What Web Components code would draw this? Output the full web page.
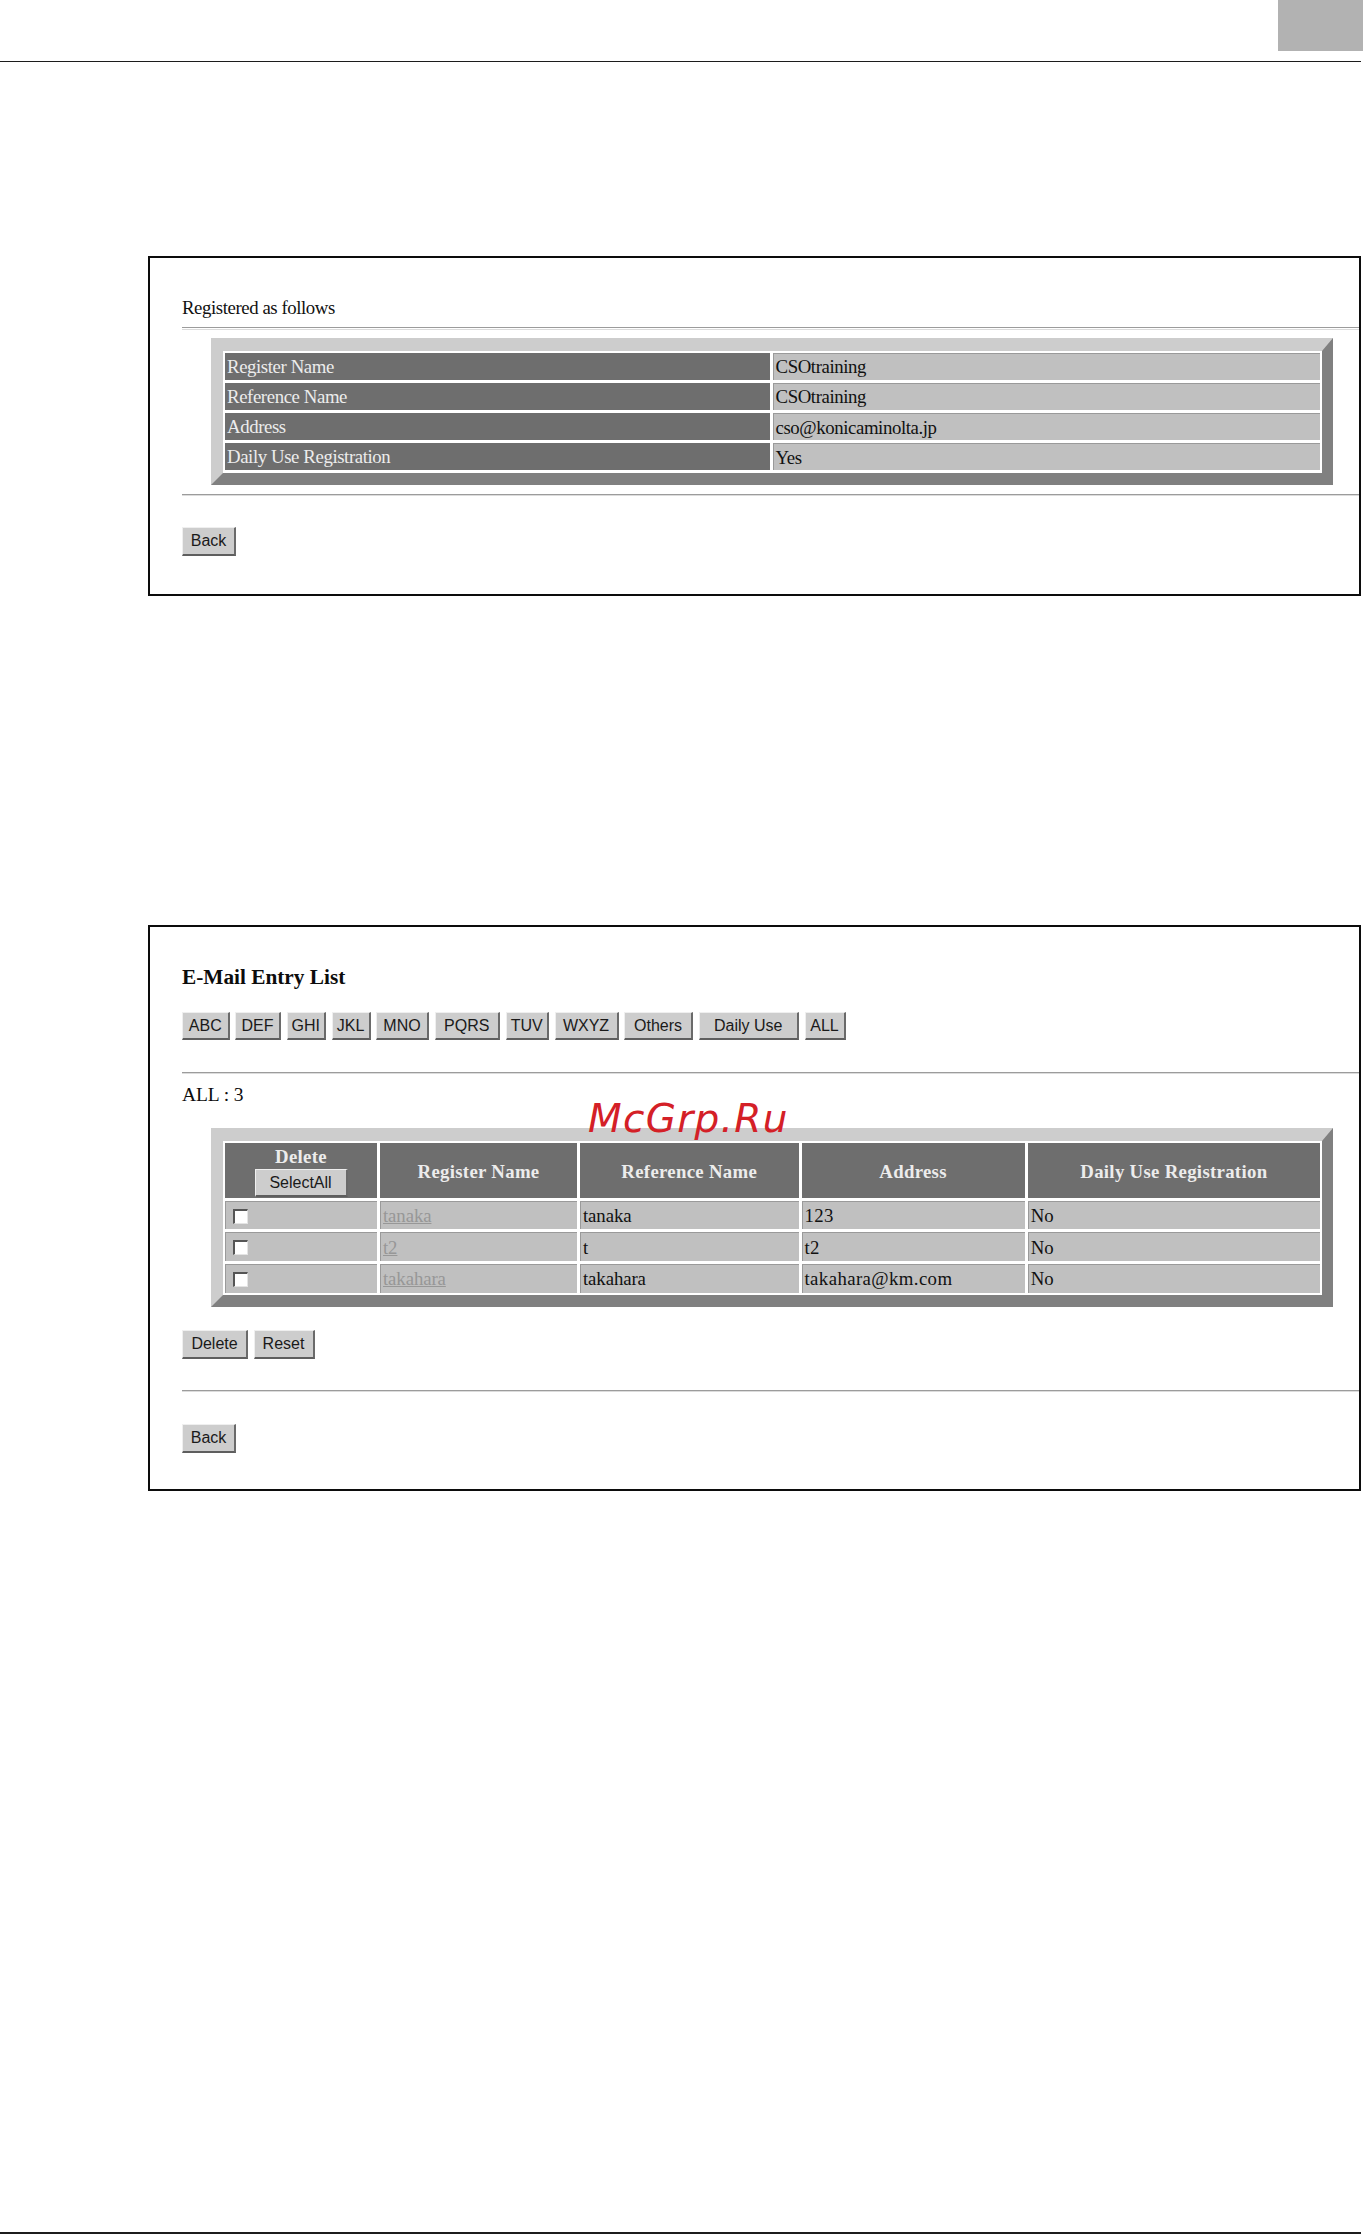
<!DOCTYPE html>
<html lang="en">
<head>
<meta charset="utf-8">
<title>E-Mail Entry List</title>
<style>
    html, body { margin: 0; padding: 0; background: #fff; }
    body { width: 1363px; height: 2234px; overflow: hidden; position: relative; font-family: "Liberation Serif", "Times New Roman", serif; color: #111; }
    #registered { margin-top: 194px; }
    #list { margin-top: 329px; }
</style>
</head>
<body>
<page-header></page-header>

<screen-frame id="registered" style="padding-top:40px;padding-bottom:38px">
    <body-line>Registered as follows</body-line>
    <rule-line style="margin-top:9px"></rule-line>
    <bevel-panel style="margin-top:8.5px">
        <record-table>
            <record-row label="Register Name">CSOtraining</record-row>
            <record-row label="Reference Name">CSOtraining</record-row>
            <record-row label="Address">cso@konicaminolta.jp</record-row>
            <record-row label="Daily Use Registration">Yes</record-row>
        </record-table>
    </bevel-panel>
    <rule-line style="margin-top:9px"></rule-line>
    <gray-button width="54" style="margin-top:30.5px">Back</gray-button>
</screen-frame>

<screen-frame id="list" style="padding-top:38px;padding-bottom:36px">
    <list-title>E-Mail Entry List</list-title>
    <button-row style="margin-top:23px">
        <gray-button width="47.5" height="28">ABC</gray-button>
        <gray-button width="46" height="28">DEF</gray-button>
        <gray-button width="39.5" height="28">GHI</gray-button>
        <gray-button width="39" height="28">JKL</gray-button>
        <gray-button width="53" height="28">MNO</gray-button>
        <gray-button width="65.5" height="28">PQRS</gray-button>
        <gray-button width="43.5" height="28">TUV</gray-button>
        <gray-button width="64" height="28">WXYZ</gray-button>
        <gray-button width="69" height="28">Others</gray-button>
        <gray-button width="100.5" height="28">Daily Use</gray-button>
        <gray-button width="41" height="28">ALL</gray-button>
    </button-row>
    <rule-line style="margin-top:32px"></rule-line>
    <body-line class="count" style="margin-top:9.5px">ALL : 3</body-line>
    <bevel-panel style="margin-top:22px">
        <entry-table>
            <entry-row name="tanaka" reference="tanaka" address="123" daily="No"></entry-row>
            <entry-row name="t2" reference="t" address="t2" daily="No"></entry-row>
            <entry-row name="takahara" reference="takahara" address="takahara@km.com" daily="No"></entry-row>
        </entry-table>
    </bevel-panel>
    <button-row style="margin-top:23px">
        <gray-button width="66">Delete</gray-button>
        <gray-button width="61">Reset</gray-button>
    </button-row>
    <rule-line style="margin-top:31px"></rule-line>
    <gray-button width="54" style="margin-top:31.5px">Back</gray-button>
</screen-frame>

<page-footer></page-footer>
<water-mark>McGrp.Ru</water-mark>

<script>
class PageHeader extends HTMLElement {
    constructor() {
        super();
        this.attachShadow({ mode: "open" }).innerHTML = `
            <style>
                :host { display: block; }
                .tab { width: 85px; height: 51px; margin-left: auto; background: #b2b2b2; }
                .line { width: 1361px; height: 1.5px; margin-top: 9.5px; background: #1c1c1c; }
            </style>
            <div class="tab"></div>
            <div class="line"></div>
        `;
    }
}

class PageFooter extends HTMLElement {
    constructor() {
        super();
        this.attachShadow({ mode: "open" }).innerHTML = `
            <style>
                :host { display: block; width: 1361px; height: 1.5px; margin-top: 741.5px; background: #1c1c1c; }
            </style>
        `;
    }
}

class ScreenFrame extends HTMLElement {
    constructor() {
        super();
        this.attachShadow({ mode: "open" }).innerHTML = `
            <style>
                :host { display: block; box-sizing: border-box; width: 1213px; margin-left: 148px; padding-left: 32px; border: 2px solid #0c0c0c; background: #fff; }
            </style>
            <slot></slot>
        `;
    }
}

class RuleLine extends HTMLElement {
    constructor() {
        super();
        this.attachShadow({ mode: "open" }).innerHTML = `
            <style>
                :host { display: block; box-sizing: border-box; height: 2.5px; border-top: 1.5px solid #9c9c9c; border-bottom: 1px solid #dcdcdc; }
            </style>
        `;
    }
}

class BodyLine extends HTMLElement {
    constructor() {
        super();
        this.attachShadow({ mode: "open" }).innerHTML = `
            <style>
                :host { display: block; font-size: 18.8px; letter-spacing: -.42px; line-height: 20px; color: #111; }
                :host(.count) { font-size: 19.5px; letter-spacing: -.1px; line-height: 22px; color: #0c0c0c; }
            </style>
            <slot></slot>
        `;
    }
}

class ListTitle extends HTMLElement {
    constructor() {
        super();
        this.attachShadow({ mode: "open" }).innerHTML = `
            <style>
                :host { display: block; font-size: 21.3px; line-height: 24px; font-weight: bold; color: #0c0c0c; }
            </style>
            <slot></slot>
        `;
    }
}

class ButtonRow extends HTMLElement {
    constructor() {
        super();
        this.attachShadow({ mode: "open" }).innerHTML = `
            <style>
                :host { display: flex; gap: 5.5px; }
            </style>
            <slot></slot>
        `;
    }
}

class GrayButton extends HTMLElement {
    constructor() {
        super();
        const width = this.getAttribute("width") || 60;
        const height = this.getAttribute("height") || 29;
        this.attachShadow({ mode: "open" }).innerHTML = `
            <style>
                :host { display: block; width: ${width}px; height: ${height}px; }
                button {
                    box-sizing: border-box;
                    display: block;
                    width: 100%;
                    height: 100%;
                    margin: 0;
                    padding: 1px 0 0;
                    background: #cdcdcd;
                    border: solid;
                    border-width: 1px 2px 2px 1px;
                    border-color: #efefef #6a6a6a #5e5e5e #efefef;
                    font: 16px/1 "Liberation Sans", Arial, sans-serif;
                    letter-spacing: 0;
                    color: #1a1a1a;
                }
            </style>
            <button type="button"><slot></slot></button>
        `;
    }
}

class BevelPanel extends HTMLElement {
    constructor() {
        super();
        this.attachShadow({ mode: "open" }).innerHTML = `
            <style>
                :host {
                    display: block;
                    box-sizing: border-box;
                    width: 1122px;
                    margin-left: 29px;
                    border: solid;
                    border-width: 13px 11.5px 12px 12px;
                    border-color: #cdcdcd #808080 #808080 #cdcdcd;
                    background: #fff;
                }
            </style>
            <slot></slot>
        `;
    }
}

class RecordTable extends HTMLElement {
    constructor() {
        super();
        this.attachShadow({ mode: "open" }).innerHTML = `
            <style>
                :host { display: grid; grid-template-columns: 544.5px 1fr; grid-auto-rows: 26.7px; column-gap: 3px; row-gap: 3.4px; padding: 2px 2px 3px; background: #fff; }
            </style>
            <slot></slot>
        `;
    }
}

class RecordRow extends HTMLElement {
    constructor() {
        super();
        this.attachShadow({ mode: "open" }).innerHTML = `
            <style>
                :host { display: contents; }
                div { box-sizing: border-box; display: flex; align-items: center; font-size: 18.8px; letter-spacing: -.4px; padding-top: 1px; }
                .label { background: #6e6e6e; color: #ececec; padding-left: 2px; }
                .value { background: #c0c0c0; color: #111; padding-left: 2px; border-top: 1px solid #9a9a9a; border-left: 1px solid #9a9a9a; }
            </style>
            <div class="label">${this.getAttribute("label")}</div>
            <div class="value"><slot></slot></div>
        `;
    }
}

class EntryTable extends HTMLElement {
    constructor() {
        super();
        this.attachShadow({ mode: "open" }).innerHTML = `
            <style>
                :host { display: grid; grid-template-columns: 152px 197px 218.5px 223.2px 1fr; grid-template-rows: 55px 28.5px 28.5px 29px; gap: 3px; padding: 2px; background: #fff; }
                .head { display: flex; align-items: center; justify-content: center; padding-top: 4px; box-sizing: border-box; background: #6e6e6e; color: #ececec; font-size: 18.8px; font-weight: bold; letter-spacing: .3px; }
                .delete { flex-direction: column; justify-content: flex-start; padding-top: 5px; line-height: 18px; }
                .delete gray-button { margin-top: 3px; letter-spacing: 0; font-weight: normal; }
            </style>
            <div class="head delete">Delete<gray-button width="93" height="28">SelectAll</gray-button></div>
            <div class="head">Register Name</div>
            <div class="head">Reference Name</div>
            <div class="head">Address</div>
            <div class="head">Daily Use Registration</div>
            <slot></slot>
        `;
    }
}

class EntryRow extends HTMLElement {
    constructor() {
        super();
        this.attachShadow({ mode: "open" }).innerHTML = `
            <style>
                :host { display: contents; }
                .cell { box-sizing: border-box; display: flex; align-items: center; padding: 1px 0 0 2px; background: #c0c0c0; color: #111; font-size: 18.8px; letter-spacing: -.1px; border-top: 1px solid #9a9a9a; border-left: 1px solid #9a9a9a; }
                .address { letter-spacing: .4px; }
                a { color: #979797; text-decoration: underline; }
                input {
                    appearance: none;
                    box-sizing: border-box;
                    width: 15px;
                    height: 15px;
                    margin: 0 0 0 5px;
                    background: #fff;
                    border: solid;
                    border-width: 2px 1px 1px 2px;
                    border-color: #555 #e4e4e4 #e4e4e4 #555;
                }
            </style>
            <div class="cell"><input type="checkbox"></div>
            <div class="cell"><a href="#">${this.getAttribute("name")}</a></div>
            <div class="cell">${this.getAttribute("reference")}</div>
            <div class="cell address">${this.getAttribute("address")}</div>
            <div class="cell">${this.getAttribute("daily")}</div>
        `;
    }
}

class WaterMark extends HTMLElement {
    constructor() {
        super();
        this.attachShadow({ mode: "open" }).innerHTML = `
            <style>
                :host { position: absolute; left: 588px; top: 1096px; font: italic 39px "DejaVu Sans", sans-serif; letter-spacing: 1.3px; color: #d42027; }
            </style>
            <slot></slot>
        `;
    }
}

customElements.define("page-header", PageHeader);
customElements.define("page-footer", PageFooter);
customElements.define("screen-frame", ScreenFrame);
customElements.define("rule-line", RuleLine);
customElements.define("body-line", BodyLine);
customElements.define("list-title", ListTitle);
customElements.define("button-row", ButtonRow);
customElements.define("gray-button", GrayButton);
customElements.define("bevel-panel", BevelPanel);
customElements.define("record-table", RecordTable);
customElements.define("record-row", RecordRow);
customElements.define("entry-table", EntryTable);
customElements.define("entry-row", EntryRow);
customElements.define("water-mark", WaterMark);
</script>
</body>
</html>
